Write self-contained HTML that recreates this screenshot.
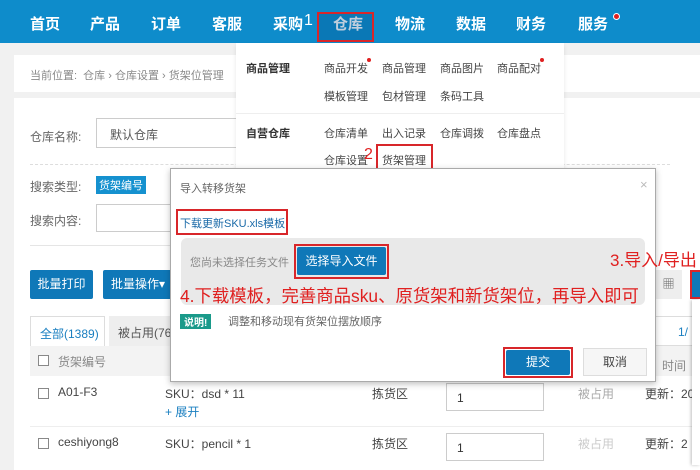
<!DOCTYPE html>
<html><head><meta charset="utf-8"><style>
*{margin:0;padding:0;box-sizing:border-box}
body{width:700px;height:470px;overflow:hidden;background:#f1f1f1;font-family:"Liberation Sans","Noto Sans CJK SC",sans-serif;font-size:12px;color:#555;position:relative}
.a{position:absolute;white-space:nowrap}
.nav{left:0;top:0;width:700px;height:43px;background:#0e8ccb}
.nav span{position:absolute;top:13px;color:#fff;font-size:15px;font-weight:bold}
.red{color:#e02020}
.box{border:2px solid #d8262a}
.btn{background:#0f78b8;color:#fff;text-align:center;border-radius:2px}
.inp{background:#fff;border:1px solid #ccc}
</style></head><body>
<div class="a nav">
<span style="left:30px">首页</span><span style="left:90px">产品</span><span style="left:151px">订单</span><span style="left:212px">客服</span><span style="left:273px">采购</span>
<span class="red" style="left:304px;font-weight:normal;font-size:16px;top:12px">1</span>
<span style="left:333px">仓库</span><span style="left:395px">物流</span><span style="left:456px">数据</span><span style="left:516px">财务</span><span style="left:578px">服务</span>
</div>
<div class="a" style="left:613px;top:13px;width:7px;height:7px;border-radius:50%;background:#e02020;border:1px solid #fff"></div>
<div class="a box" style="left:317px;top:12px;width:57px;height:30px;background:rgba(0,60,120,.25)"></div>
<div class="a" style="left:14px;top:55px;width:686px;height:37px;background:#fff"></div>
<div class="a" style="left:30px;top:67px;color:#888;font-size:11px">当前位置:&nbsp; 仓库 › 仓库设置 › 货架位管理</div>
<div class="a" style="left:14px;top:98px;width:686px;height:372px;background:#fff"></div>
<div class="a" style="left:30px;top:128px;color:#666">仓库名称:</div>
<div class="a inp" style="left:96px;top:118px;width:150px;height:30px"></div>
<div class="a" style="left:110px;top:126px;color:#555">默认仓库</div>
<div class="a" style="left:30px;top:164px;width:640px;border-top:1px dashed #ddd"></div>
<div class="a" style="left:30px;top:178px;color:#666">搜索类型:</div>
<div class="a" style="left:96px;top:176px;background:#1591cf;color:#fff;padding:1px 3px;font-size:11px">货架编号</div>
<div class="a" style="left:30px;top:212px;color:#666">搜索内容:</div>
<div class="a inp" style="left:96px;top:204px;width:76px;height:28px"></div>
<div class="a" style="left:30px;top:245px;width:140px;border-top:1px solid #e5e5e5"></div>
<div class="a btn" style="left:30px;top:270px;width:63px;height:29px;line-height:29px">批量打印</div>
<div class="a btn" style="left:103px;top:270px;width:70px;height:29px;line-height:29px">批量操作▾</div>
<div class="a" style="left:30px;top:316px;width:75px;height:30px;border:1px solid #ddd;border-bottom:none;background:#fff;color:#1a7fc0;padding:8px 0 0 9px">全部(1389)</div>
<div class="a" style="left:109px;top:316px;width:65px;height:30px;background:#eee;padding:8px 0 0 9px">被占用(76)</div>
<div class="a" style="left:30px;top:346px;width:670px;height:30px;background:#f3f3f3"></div>
<div class="a" style="left:38px;top:355px;width:11px;height:11px;border:1px solid #888;background:#fff"></div>
<div class="a" style="left:58px;top:353px;color:#888">货架编号</div>
<div class="a" style="left:38px;top:388px;width:11px;height:11px;border:1px solid #888"></div>
<div class="a" style="left:58px;top:385px;color:#444">A01-F3</div>
<div class="a" style="left:165px;top:385px;color:#444">SKU：dsd * 11</div>
<div class="a" style="left:165px;top:403px;color:#1a7fc0">+ 展开</div>
<div class="a" style="left:372px;top:385px;color:#444">拣货区</div>
<div class="a inp" style="left:446px;top:383px;width:98px;height:28px;padding:7px 10px;color:#333">1</div>
<div class="a" style="left:578px;top:385px;color:#aaa">被占用</div>
<div class="a" style="left:645px;top:385px;color:#444">更新：20</div>
<div class="a" style="left:30px;top:426px;width:670px;border-top:1px solid #eee"></div>
<div class="a" style="left:38px;top:438px;width:11px;height:11px;border:1px solid #888"></div>
<div class="a" style="left:58px;top:435px;color:#444">ceshiyong8</div>
<div class="a" style="left:165px;top:435px;color:#444">SKU：pencil * 1</div>
<div class="a" style="left:372px;top:435px;color:#444">拣货区</div>
<div class="a inp" style="left:446px;top:433px;width:98px;height:28px;padding:7px 10px;color:#333">1</div>
<div class="a" style="left:578px;top:435px;color:#ccc">被占用</div>
<div class="a" style="left:645px;top:435px;color:#444">更新：2</div>
<div class="a" style="left:655px;top:270px;width:27px;height:29px;background:#eee;color:#666;text-align:center;line-height:29px">▦</div>
<div class="a" style="left:690px;top:270px;width:10px;height:29px;background:#0f78b8;border:2px solid #d8262a;border-right:none"></div>
<div class="a" style="left:655px;top:316px;width:45px;height:30px;border:1px solid #ddd;color:#1a7fc0;padding:8px 0 0 22px">1/</div>
<div class="a" style="left:692px;top:300px;width:8px;height:165px;background:#fff;box-shadow:-1px 0 3px rgba(0,0,0,.25)"></div>
<div class="a" style="left:662px;top:357px;color:#888">时间</div>
<div class="a" style="left:236px;top:43px;width:328px;height:132px;background:#fff;box-shadow:0 2px 4px rgba(0,0,0,.1)"></div>
<div class="a" style="left:246px;top:60px;color:#333;font-weight:bold;font-size:11px">商品管理</div>
<div class="a" style="left:324px;top:60px;font-size:11px;color:#444">商品开发</div>
<div class="a" style="left:367px;top:58px;width:4px;height:4px;border-radius:50%;background:#e02020"></div>
<div class="a" style="left:382px;top:60px;font-size:11px;color:#444">商品管理</div>
<div class="a" style="left:440px;top:60px;font-size:11px;color:#444">商品图片</div>
<div class="a" style="left:497px;top:60px;font-size:11px;color:#444">商品配对</div>
<div class="a" style="left:540px;top:58px;width:4px;height:4px;border-radius:50%;background:#e02020"></div>
<div class="a" style="left:324px;top:88px;font-size:11px;color:#444">模板管理</div>
<div class="a" style="left:382px;top:88px;font-size:11px;color:#444">包材管理</div>
<div class="a" style="left:440px;top:88px;font-size:11px;color:#444">条码工具</div>
<div class="a" style="left:236px;top:113px;width:328px;border-top:1px solid #eee"></div>
<div class="a" style="left:246px;top:125px;color:#333;font-weight:bold;font-size:11px">自营仓库</div>
<div class="a" style="left:324px;top:125px;font-size:11px;color:#444">仓库清单</div>
<div class="a" style="left:382px;top:125px;font-size:11px;color:#444">出入记录</div>
<div class="a" style="left:440px;top:125px;font-size:11px;color:#444">仓库调拨</div>
<div class="a" style="left:497px;top:125px;font-size:11px;color:#444">仓库盘点</div>
<div class="a" style="left:324px;top:152px;font-size:11px;color:#444">仓库设置</div>
<div class="a red" style="left:364px;top:146px;font-size:16px">2</div>
<div class="a box" style="left:376px;top:144px;width:57px;height:28px"></div>
<div class="a" style="left:382px;top:152px;font-size:11px;color:#444">货架管理</div>
<div class="a" style="left:170px;top:168px;width:486px;height:214px;background:#fff;border:1px solid #aaa;box-shadow:0 2px 6px rgba(0,0,0,.25)"></div>
<div class="a" style="left:180px;top:180px;color:#666;font-size:11px">导入转移货架</div>
<div class="a" style="left:640px;top:177px;color:#bbb;font-size:13px">×</div>
<div class="a box" style="left:176px;top:209px;width:112px;height:26px"></div>
<div class="a" style="left:180px;top:215px;color:#1a6aa8;font-size:11px">下载更新SKU.xls模板</div>
<div class="a" style="left:181px;top:238px;width:464px;height:67px;background:#e9e9e9;border-radius:6px"></div>
<div class="a" style="left:190px;top:254px;color:#888;font-size:11px">您尚未选择任务文件</div>
<div class="a box" style="left:294px;top:244px;width:95px;height:35px"></div>
<div class="a btn" style="left:297px;top:247px;width:89px;height:28px;line-height:28px">选择导入文件</div>
<div class="a red" style="left:180px;top:283px;font-size:17.4px">4.下载模板，完善商品sku、原货架和新货架位，再导入即可</div>
<div class="a red" style="left:610px;top:246px;font-size:17px">3.导入/导出</div>
<div class="a" style="left:180px;top:314px;background:#1a9a8a;color:#fff;font-size:10px;padding:0 4px;font-weight:bold">说明!</div>
<div class="a" style="left:228px;top:313px;color:#666;font-size:11px">调整和移动现有货架位摆放顺序</div>
<div class="a box" style="left:503px;top:347px;width:70px;height:31px"></div>
<div class="a btn" style="left:506px;top:350px;width:64px;height:25px;line-height:25px">提交</div>
<div class="a" style="left:583px;top:348px;width:64px;height:28px;border:1px solid #ddd;background:#f6f6f6;text-align:center;line-height:26px;color:#444">取消</div>
</body></html>
